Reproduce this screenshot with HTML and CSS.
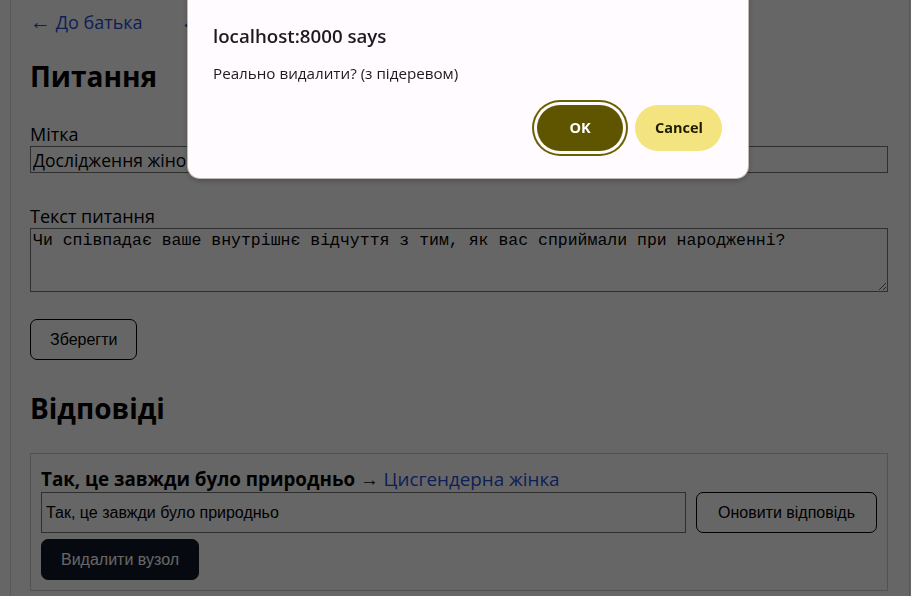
FILE: index.html
```html
<!DOCTYPE html>
<html lang="uk">
<head>
<meta charset="utf-8">
<title>Питання</title>
<link rel="stylesheet" href="styles.css">
</head>
<body>
<div class="page">
  <nav class="nav">
    <a href="#"><span class="arrow">←</span> До батька</a>
    <a href="#"><span class="arrow">←</span> До кореня</a>
  </nav>
  <h1 class="title">Питання</h1>
  <form class="form">
    <label class="label">Мітка</label>
    <input class="field" type="text" value="Дослідження жіночності">
    <label class="label label-gap">Текст питання</label>
    <textarea class="area">Чи співпадає ваше внутрішнє відчуття з тим, як вас сприймали при народженні?</textarea>
    <div class="actions"><button type="button" class="btn">Зберегти</button></div>
  </form>
  <h2 class="title title-2">Відповіді</h2>
  <div class="answer">
    <div class="answer-head"><b>Так, це завжди було природньо</b> → <a href="#">Цисгендерна жінка</a></div>
    <div class="answer-row">
      <input class="answer-field" type="text" value="Так, це завжди було природньо">
      <button type="button" class="btn btn-tall">Оновити відповідь</button>
    </div>
    <button type="button" class="btn btn-dark">Видалити вузол</button>
  </div>
</div>
<div class="overlay"></div>
<div class="dialog">
  <div class="dialog-title">localhost:8000 says</div>
  <div class="dialog-msg">Реально видалити? (з підеревом)</div>
  <div class="dialog-buttons">
    <button type="button" class="dbtn dbtn-ok">OK</button>
    <button type="button" class="dbtn dbtn-cancel">Cancel</button>
  </div>
</div>
</body>
</html>
```
FILE: styles.css
```css
* { box-sizing: border-box; }
html, body { margin: 0; padding: 0; background: #fff; }
body {
  font-family: "Open Sans", "Noto Sans", sans-serif;
  color: #000;
  overflow: hidden;
  height: 596px;
}
.page {
  margin-left: 10px;
  width: 900px;
  min-height: 596px;
  border-left: 1px solid #ddd;
  border-right: 1px solid #ddd;
  padding: 10px 21px 0 19px;
}
.nav { display: flex; gap: 38px; font-size: 18px; line-height: 24px; }
.nav a { color: #1f4fd6; text-decoration: none; }
.arrow { font-size: 21px; line-height: 20px; }
.title { font-size: 28px; line-height: 36px; font-weight: 700; margin: 24px 0 28px; }
.title-2 { margin: 30px 0 27px; }
.form { display: flex; flex-direction: column; }
.label { font-size: 18px; line-height: 24px; }
.label-gap { margin-top: 31px; }
.field {
  height: 27px;
  border: 1px solid #767676;
  font: 17.5px/23px "Open Sans", sans-serif;
  padding: 1px 2px;
  color: #000;
  margin: 0;
}
.area {
  height: 64px;
  border: 1px solid #767676;
  font: 16.5px/19px "Liberation Mono", monospace;
  padding: 2px 2px;
  margin: 0;
  resize: vertical;
  color: #000;
}
.actions { margin-top: 27px; }
.btn {
  font: 16px/19px "Liberation Sans", Arial, sans-serif;
  background: #fff;
  color: #000;
  border: 1px solid #000;
  border-radius: 7px;
  padding: 10px 19px;
  height: 41px;
}
.answer {
  border: 1px solid #ccc;
  padding: 12px 10px 10px;
  display: flex;
  flex-direction: column;
  align-items: flex-start;
}
.answer-head { font-size: 18.8px; line-height: 26px; }
.answer-head a { color: #1f4fd6; text-decoration: none; }
.answer-row { display: flex; gap: 10px; width: 100%; margin-bottom: 6px; }
.answer-field {
  flex: 1;
  height: 41px;
  border: 1px solid #767676;
  font: 16px/19px "Liberation Sans", Arial, sans-serif;
  padding: 0 4px;
  margin: 0;
  color: #000;
}
.btn-tall { padding: 10px 21px; }
.btn-dark { background: #111827; color: #fff; border-color: #111827; padding: 10px 19px; }
.overlay {
  position: fixed;
  inset: 0;
  background: rgba(0, 0, 0, 0.6);
}
.dialog {
  position: fixed;
  left: 188px;
  top: -12px;
  width: 560px;
  height: 190px;
  background: #fffbfe;
  border-radius: 12px;
  box-shadow: 0 0 0 1px rgba(200, 195, 190, 0.9), 0 2px 6px rgba(0, 0, 0, 0.3);
  padding: 36px 26px 0 25px;
  font-family: "Open Sans", "Noto Sans", sans-serif;
  color: #1d1b20;
}
.dialog-title { font-size: 18.7px; line-height: 24px; font-weight: 600; }
.dialog-msg { font-size: 15.2px; line-height: 20px; margin-top: 15px; }
.dialog-buttons { display: flex; justify-content: flex-end; gap: 12px; margin-top: 22px; }
.dbtn {
  font: 700 14.5px/20px "Open Sans", sans-serif;
  border: none;
  border-radius: 24px;
  height: 46px;
  padding: 0 20px;
}
.dbtn-ok {
  width: 86px;
  background: #5f5500;
  color: #fff;
  box-shadow: 0 0 0 3px #fffbfe, 0 0 0 5px #6b6000;
}
.dbtn-cancel { width: 87px; background: #f3e47f; color: #1e1c00; }
```
